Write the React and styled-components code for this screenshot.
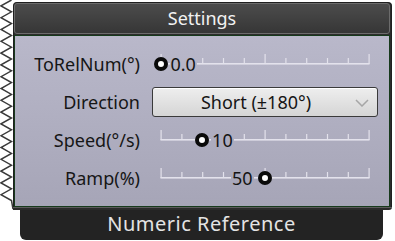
import React from "react";
import styled, { createGlobalStyle } from "styled-components";

const GlobalStyle = createGlobalStyle`
  * {
    margin: 0;
    padding: 0;
    box-sizing: border-box;
  }
  body {
    background: #ffffff;
    font-family: "Noto Sans", "Open Sans", sans-serif;
  }
`;

// panel gradient, pinned to the viewport so the value labels can mask the track with it
const PANEL_BG = "linear-gradient(to bottom, #b9b8ca 35px, #a6a5b7 206px) fixed";

const Canvas = styled.div`
  display: flex;
  width: 395px;
  height: 241px;
  overflow: hidden;
  background: #ffffff;
`;

const Edge = styled.svg`
  flex: 0 0 13px;
  display: block;
`;

const Body = styled.div`
  display: flex;
  flex-direction: column;
  width: 379px;
  padding-top: 2px;
`;

const Frame = styled.div`
  display: flex;
  flex-direction: column;
  gap: 1px;
  border: 1px solid #202020;
  border-bottom: none;
  border-radius: 4px 4px 0 0;
  background: #2c2c2c;
  padding-right: 1px;
`;

const TitleBar = styled.div`
  height: 31px;
  border: 1px solid #6c6c6c;
  border-radius: 3px;
  background: linear-gradient(to bottom, #4c4c4c, #363636);
  color: #f2f2f2;
  font-size: 18px;
  display: flex;
  align-items: center;
  justify-content: center;
  padding-bottom: 1px;
`;

const Panel = styled.div`
  height: 172px;
  border: 1px solid #173a1c;
  background: ${PANEL_BG};
  padding: 9px 0 8px;
  display: grid;
  grid-template-columns: 125px 226px;
  grid-auto-rows: 38px;
  column-gap: 12px;
  align-items: center;
`;

const Label = styled.div`
  text-align: right;
  font-size: 18px;
  color: #161616;
  line-height: 24px;
`;

const Dropdown = styled.div`
  height: 30px;
  display: flex;
  align-items: center;
  border: 1.5px solid #3a3a3a;
  border-radius: 3px;
  background: linear-gradient(to bottom, #eeeeee, #d5d5d5);
  box-shadow: inset 0 1px 0 #ffffff;
`;

const DropText = styled.span`
  flex: 1;
  text-align: center;
  font-size: 18px;
  color: #151515;
  padding-left: 4px;
`;

const Chevron = styled.svg`
  flex: 0 0 14px;
  margin-right: 8px;
  margin-top: 2px;
`;

const SliderBox = styled.div`
  position: relative;
  height: 38px;
`;

const Track = styled.svg`
  position: absolute;
  inset: 0;
`;

const Knob = styled.div`
  position: absolute;
  top: 12px;
  width: 14px;
  height: 14px;
  border-radius: 50%;
  border: 4px solid #0a0a0a;
  background: #ffffff;
`;

const Value = styled.span`
  position: absolute;
  top: 7px;
  height: 24px;
  line-height: 24px;
  padding: 0 1px;
  font-size: 18px;
  color: #141414;
  background: ${PANEL_BG};
`;

const Footer = styled.div`
  display: flex;
  flex-direction: column;
  height: 34px;
`;

const Shoulder = styled.div`
  height: 3px;
  background: #2a2a2a;
  border-top: 1px solid #5a5a5a;
  border-radius: 0 0 4px 0;
`;

const Tab = styled.div`
  height: 30px;
  margin: 0 9px 0 7px;
  background: #232323;
  border-radius: 0 0 6px 6px;
  color: #e4e4e4;
  font-size: 20px;
  letter-spacing: 0.5px;
  display: flex;
  align-items: center;
  justify-content: center;
  padding-bottom: 4px;
`;

const TRACK_START = 8.5;
const TRACK_LEN = 208;

function Slider({ value, min, max, text, side }) {
  const x = TRACK_START + ((value - min) / (max - min)) * TRACK_LEN;
  const ticks = Array.from({ length: 11 }, (_, i) => TRACK_START + (i * TRACK_LEN) / 10);
  const valuePos =
    side === "left" ? { right: 226 - x + 11 } : { left: x + 9 };
  return (
    <SliderBox>
      <Track width="226" height="38">
        <rect x={TRACK_START} y="18" width={TRACK_LEN + 1} height="1.6" fill="#e3e2ec" />
        {ticks.map((t, i) => {
          const major = i % 5 === 0;
          return (
            <rect
              key={i}
              x={t}
              y={major ? 9 : 13}
              width="1.2"
              height={major ? 10 : 6}
              fill="#e3e2ec"
            />
          );
        })}
      </Track>
      <Knob style={{ left: x - 7 }} />
      <Value style={valuePos}>{text}</Value>
    </SliderBox>
  );
}

function ZigzagEdge() {
  const pts = [];
  let y = 0;
  let right = true;
  while (y < 202) {
    pts.push(`${right ? 11.5 : 1},${y}`);
    y += 5.9;
    right = !right;
  }
  pts.push("13,209");
  return (
    <Edge width="13" height="241">
      <polyline points={pts.join(" ")} fill="none" stroke="#3a3a3a" strokeWidth="1.5" />
    </Edge>
  );
}

export default function App() {
  return (
    <Canvas>
      <GlobalStyle />
      <ZigzagEdge />
      <Body>
        <Frame>
          <TitleBar>Settings</TitleBar>
          <Panel>
            <Label>ToRelNum(°)</Label>
            <Slider value={0} min={0} max={360} text="0.0" side="right" />

            <Label>Direction</Label>
            <Dropdown>
              <DropText>Short (±180°)</DropText>
              <Chevron width="14" height="8" viewBox="0 0 14 8">
                <polyline points="1,1 7,7 13,1" fill="none" stroke="#a6a6a6" strokeWidth="1.5" />
              </Chevron>
            </Dropdown>

            <Label>Speed(°/s)</Label>
            <Slider value={10} min={0} max={50} text="10" side="right" />

            <Label>Ramp(%)</Label>
            <Slider value={50} min={0} max={100} text="50" side="left" />
          </Panel>
        </Frame>
        <Footer>
          <Shoulder />
          <Tab>Numeric Reference</Tab>
        </Footer>
      </Body>
    </Canvas>
  );
}
